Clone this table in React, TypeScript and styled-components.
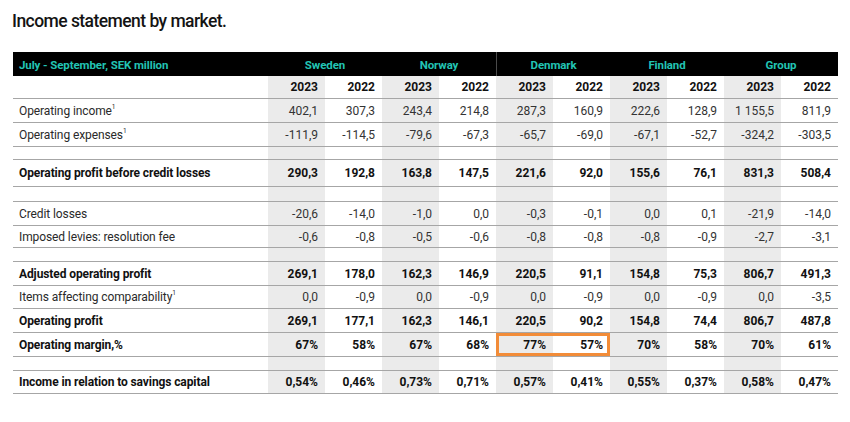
import styled, { createGlobalStyle } from "styled-components";

const GlobalStyle = createGlobalStyle`
  body {
    margin: 0;
    background: #fff;
    font-family: Roboto, "Liberation Sans", Arial, sans-serif;
    color: #1a1a1a;
  }
`;

const COLS = "255px repeat(10, 57px)";

type Row = {
  label?: string;
  sup?: boolean;
  bold?: boolean;
  h: number;
  values?: string[];
};

const rows: Row[] = [
  {
    label: "Operating income",
    sup: true,
    h: 24,
    values: ["402,1", "307,3", "243,4", "214,8", "287,3", "160,9", "222,6", "128,9", "1 155,5", "811,9"],
  },
  {
    label: "Operating expenses",
    sup: true,
    h: 24,
    values: ["-111,9", "-114,5", "-79,6", "-67,3", "-65,7", "-69,0", "-67,1", "-52,7", "-324,2", "-303,5"],
  },
  { h: 13 },
  {
    label: "Operating profit before credit losses",
    bold: true,
    h: 27,
    values: ["290,3", "192,8", "163,8", "147,5", "221,6", "92,0", "155,6", "76,1", "831,3", "508,4"],
  },
  { h: 15 },
  {
    label: "Credit losses",
    h: 24,
    values: ["-20,6", "-14,0", "-1,0", "0,0", "-0,3", "-0,1", "0,0", "0,1", "-21,9", "-14,0"],
  },
  {
    label: "Imposed levies: resolution fee",
    h: 22,
    values: ["-0,6", "-0,8", "-0,5", "-0,6", "-0,8", "-0,8", "-0,8", "-0,9", "-2,7", "-3,1"],
  },
  { h: 14 },
  {
    label: "Adjusted operating profit",
    bold: true,
    h: 24,
    values: ["269,1", "178,0", "162,3", "146,9", "220,5", "91,1", "154,8", "75,3", "806,7", "491,3"],
  },
  {
    label: "Items affecting comparability",
    sup: true,
    h: 23,
    values: ["0,0", "-0,9", "0,0", "-0,9", "0,0", "-0,9", "0,0", "-0,9", "0,0", "-3,5"],
  },
  {
    label: "Operating profit",
    bold: true,
    h: 24,
    values: ["269,1", "177,1", "162,3", "146,1", "220,5", "90,2", "154,8", "74,4", "806,7", "487,8"],
  },
  {
    label: "Operating margin,%",
    bold: true,
    h: 24,
    values: ["67%", "58%", "67%", "68%", "77%", "57%", "70%", "58%", "70%", "61%"],
  },
  { h: 14 },
  {
    label: "Income in relation to savings capital",
    bold: true,
    h: 23,
    values: ["0,54%", "0,46%", "0,73%", "0,71%", "0,57%", "0,41%", "0,55%", "0,37%", "0,58%", "0,47%"],
  },
];

const markets = ["Sweden", "Norway", "Denmark", "Finland", "Group"];

const Page = styled.div`
  padding: 10px 0 0 13px;
`;

const Title = styled.h1`
  margin: 0 0 0 -1px;
  font-size: 17.5px;
  line-height: 22px;
  font-weight: 500;
  letter-spacing: -0.55px;
  color: #141414;
`;

const Table = styled.div`
  margin-top: 20px;
  width: 825px;
`;

const HeadRow = styled.div`
  display: grid;
  grid-template-columns: ${COLS};
  height: 24px;
  background: #000;
`;

const HeadCell = styled.div<{ $divider?: boolean; $left?: boolean }>`
  grid-column: ${(p) => (p.$left ? "span 1" : "span 2")};
  display: flex;
  align-items: center;
  justify-content: ${(p) => (p.$left ? "flex-start" : "center")};
  padding-left: ${(p) => (p.$left ? "6px" : "0")};
  padding-top: 1px;
  color: #22c4b4;
  font-size: 11.5px;
  font-weight: 700;
  letter-spacing: -0.1px;
  border-left: ${(p) => (p.$divider ? "1px solid #4a4a4a" : "none")};
`;

const BodyRow = styled.div<{ $h: number }>`
  display: grid;
  grid-template-columns: ${COLS};
  height: ${(p) => p.$h}px;
  box-sizing: border-box;
  border-bottom: 1px solid #a6a6a6;
`;

const Cell = styled.div<{ $shade?: boolean; $bold?: boolean; $hl?: "left" | "right" }>`
  display: flex;
  align-items: center;
  justify-content: flex-end;
  padding-right: 7px;
  background: ${(p) => (p.$shade ? "#ebebeb" : "transparent")};
  font-size: 12px;
  font-weight: ${(p) => (p.$bold ? 700 : 400)};
  color: ${(p) => (p.$bold ? "#111" : "#333")};
  white-space: nowrap;
  box-shadow: ${(p) =>
    p.$hl === "left"
      ? "inset 3px 3px 0 #f28c38, inset 0 -3px 0 #f28c38"
      : p.$hl === "right"
      ? "inset -3px 3px 0 #f28c38, inset 0 -3px 0 #f28c38"
      : "none"};
`;

const LabelCell = styled(Cell)`
  justify-content: flex-start;
  padding-left: 6px;
  padding-right: 0;
  letter-spacing: -0.1px;
  color: ${(p) => (p.$bold ? "#111" : "#2a2a2a")};
`;

const Sup = styled.sup`
  font-size: 6.5px;
  line-height: 0;
  position: relative;
  top: -1px;
`;

export default function App() {
  return (
    <Page>
      <GlobalStyle />
      <Title>Income statement by market.</Title>
      <Table>
        <HeadRow>
          <HeadCell $left>July - September, SEK million</HeadCell>
          {markets.map((m) => (
            <HeadCell key={m} $divider={m === "Denmark"}>
              {m}
            </HeadCell>
          ))}
        </HeadRow>
        <BodyRow $h={23}>
          <LabelCell />
          {markets.flatMap((m) => [
            <Cell key={m + "a"} $shade $bold>
              2023
            </Cell>,
            <Cell key={m + "b"} $bold>
              2022
            </Cell>,
          ])}
        </BodyRow>
        {rows.map((r, i) => (
          <BodyRow key={i} $h={r.h}>
            <LabelCell $bold={r.bold}>
              {r.label && (
                <span>
                  {r.label}
                  {r.sup && <Sup>1</Sup>}
                </span>
              )}
            </LabelCell>
            {Array.from({ length: 10 }).map((_, j) => {
              const isMargin = r.label === "Operating margin,%";
              const hl = isMargin && j === 4 ? "left" : isMargin && j === 5 ? "right" : undefined;
              return (
                <Cell key={j} $shade={j % 2 === 0} $bold={r.bold} $hl={hl}>
                  {r.values ? r.values[j] : ""}
                </Cell>
              );
            })}
          </BodyRow>
        ))}
      </Table>
    </Page>
  );
}
